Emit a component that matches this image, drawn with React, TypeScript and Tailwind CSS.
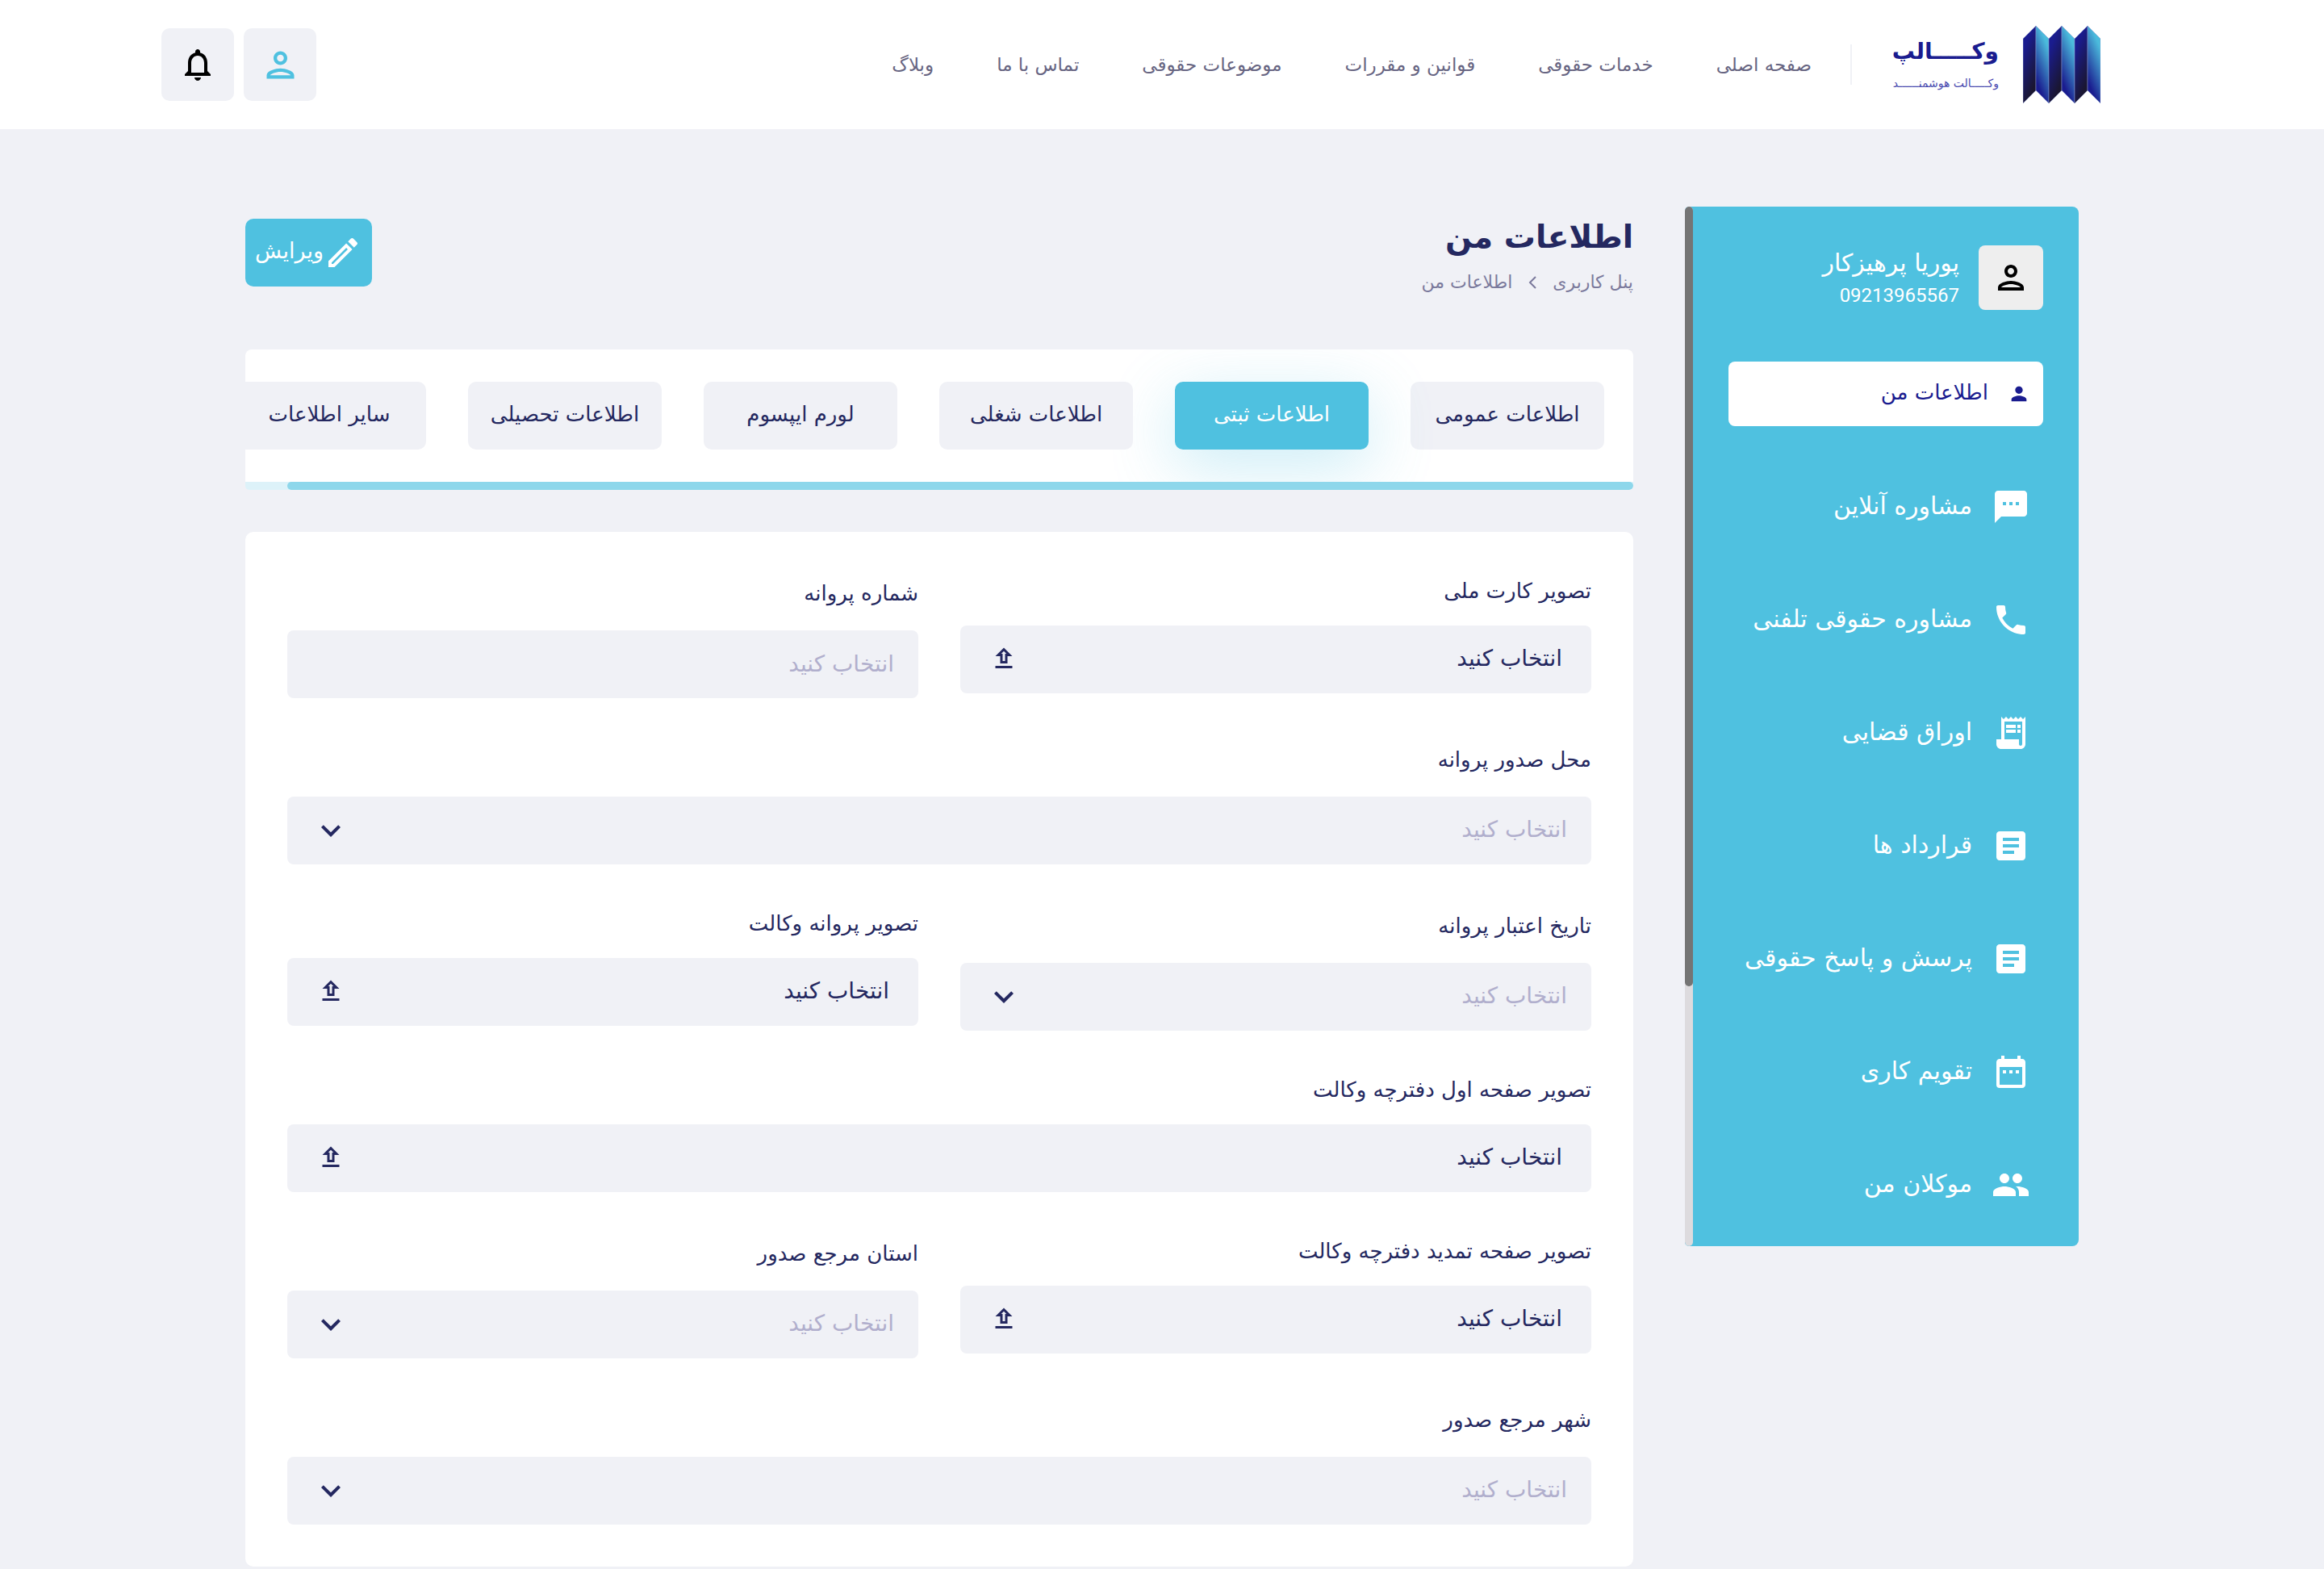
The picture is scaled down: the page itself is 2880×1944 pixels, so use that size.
import type { ReactNode } from "react";
import type { IconType } from "react-icons";
import {
  MdArticle,
  MdDateRange,
  MdExpandMore,
  MdNotificationsNone,
  MdOutlineEdit,
  MdOutlinePerson,
  MdOutlineUpload,
  MdPeople,
  MdPerson,
  MdPhone,
  MdReceiptLong,
  MdSms,
} from "react-icons/md";

const NAV = ["صفحه اصلی", "خدمات حقوقی", "قوانین و مقررات", "موضوعات حقوقی", "تماس با ما", "وبلاگ"];

const MENU: { label: string; icon: IconType }[] = [
  { label: "مشاوره آنلاین", icon: MdSms },
  { label: "مشاوره حقوقی تلفنی", icon: MdPhone },
  { label: "اوراق قضایی", icon: MdReceiptLong },
  { label: "قرارداد ها", icon: MdArticle },
  { label: "پرسش و پاسخ حقوقی", icon: MdArticle },
  { label: "تقویم کاری", icon: MdDateRange },
  { label: "موکلان من", icon: MdPeople },
];

const TABS = [
  "اطلاعات عمومی",
  "اطلاعات ثبتی",
  "اطلاعات شغلی",
  "لورم ایپسوم",
  "اطلاعات تحصیلی",
  "سایر اطلاعات",
];

function LogoMark() {
  const pleats = [0, 32, 64];
  return (
    <svg viewBox="0 0 96 96" className="size-24" aria-hidden="true">
      <defs>
        <linearGradient id="pleat-dark" x1="0.2" y1="0" x2="0.6" y2="1">
          <stop offset="0.2" stopColor="#1a1c8f" />
          <stop offset="0.9" stopColor="#1a1630" />
        </linearGradient>
        <linearGradient id="pleat-light" x1="0.7" y1="0" x2="0.3" y2="1">
          <stop offset="0.15" stopColor="#4bbbdc" />
          <stop offset="0.85" stopColor="#1a1c8f" />
        </linearGradient>
      </defs>
      {pleats.map((x) => (
        <g key={x} stroke="#8f9bd0" strokeWidth="0.5">
          <path d={`M${x} 16L${x + 16} 0V80L${x} 96Z`} fill="url(#pleat-dark)" />
          <path d={`M${x + 16} 0L${x + 32} 16V96L${x + 16} 80Z`} fill="url(#pleat-light)" />
        </g>
      ))}
    </svg>
  );
}

function Header() {
  return (
    <header className="flex h-40 items-center justify-between bg-white pr-[277px] pl-[200px]">
      <div className="flex items-center">
        <a href="#" className="flex items-center gap-[30px]">
          <LogoMark />
          <span className="flex w-[130px] flex-col items-start whitespace-nowrap text-[#1a1c8f]">
            <span className="text-[28px] leading-[46px] font-bold">وکـــــالپ</span>
            <span className="text-[14px] leading-[32px] text-[#4a4bb0]">وکـــــالت هوشمنــــــد</span>
          </span>
        </a>
        <div className="mr-[52px] ml-12 h-[50px] w-[2px] bg-[#f0f1f6]" />
        <nav className="flex items-center gap-[78px]">
          {NAV.map((item) => (
            <a key={item} href="#" className="text-[23px] leading-8 whitespace-nowrap text-[#676582]">
              {item}
            </a>
          ))}
        </nav>
      </div>
      <div className="flex gap-3">
        <button aria-label="حساب کاربری" className="flex size-[90px] items-center justify-center rounded-[10px] bg-[#f0f1f6] text-[#4fc1e0]">
          <MdOutlinePerson className="size-[51px]" />
        </button>
        <button aria-label="اعلان ها" className="flex size-[90px] items-center justify-center rounded-[10px] bg-[#f0f1f6] text-black">
          <MdNotificationsNone className="size-12" />
        </button>
      </div>
    </header>
  );
}

function Sidebar() {
  return (
    <aside className="flex w-[488px] shrink-0 overflow-hidden rounded-l-[5px] rounded-r-[8px] bg-[#4fc1e0] text-white">
      <div className="flex-1 px-11 pt-12 pb-9">
        <div className="flex items-center gap-6">
          <div className="flex size-20 items-center justify-center rounded-[8px] bg-[#eeeeee] text-black">
            <MdOutlinePerson className="size-12" />
          </div>
          <div className="flex flex-col">
            <span className="text-[30px] leading-11 whitespace-nowrap">پوریا پرهیزکار</span>
            <span className="font-[Roboto] text-[24px] leading-9">09213965567</span>
          </div>
        </div>
        <nav className="mt-16 flex flex-col gap-[60px]">
          <a href="#" aria-current="page" className="flex h-20 items-center gap-6 rounded-[8px] bg-white pr-4 text-[26px] whitespace-nowrap text-[#1a1c8f]">
            <MdPerson className="size-7" />
            <span className="pb-1">اطلاعات من</span>
          </a>
          {MENU.map(({ label, icon: Icon }) => (
            <a key={label} href="#" className="flex h-20 items-center gap-6 pr-4 text-[30px] whitespace-nowrap">
              <Icon className="size-12" />
              <span className="pb-1">{label}</span>
            </a>
          ))}
        </nav>
      </div>
      <div className="w-[10px] shrink-0 rounded-[5px] bg-[#dddbde]">
        <div className="h-3/4 rounded-[5px] bg-[#757575]" />
      </div>
    </aside>
  );
}

function PageHeading() {
  return (
    <div className="flex h-[177px] items-start justify-between">
      <div className="flex flex-col">
        <h1 className="text-[39px] leading-[76px] font-bold text-[#242860]">اطلاعات من</h1>
        <nav className="flex items-center gap-5 text-[22px] leading-9 text-[#7b7a9c]">
          <a href="#">پنل کاربری</a>
          <svg viewBox="0 0 10 16" className="h-4 w-[10px]" fill="none" stroke="currentColor" strokeWidth="2" aria-hidden="true">
            <path d="M9 1L2 8l7 7" />
          </svg>
          <span>اطلاعات من</span>
        </nav>
      </div>
      <button className="mt-[15px] flex h-[84px] w-[157px] items-center rounded-[10px] bg-[#4fc1e0] pr-3 text-[27px] text-white">
        <MdOutlineEdit className="size-12 shrink-0" />
        <span className="pb-1">ویرایش</span>
      </button>
    </div>
  );
}

function Tabs() {
  return (
    <div className="overflow-hidden rounded-t-[8px] rounded-b-[5px]">
      <div role="tablist" className="flex gap-[52px] overflow-hidden bg-white px-9 py-10">
        {TABS.map((tab, i) => (
          <button
            key={tab}
            role="tab"
            aria-selected={i === 1}
            className={
              i === 1
                ? "h-[84px] w-60 shrink-0 rounded-[10px] bg-[#4fc1e0] pb-1 text-[26px] whitespace-nowrap text-white shadow-[0_20px_80px_rgba(79,193,224,0.3)]"
                : "h-[84px] w-60 shrink-0 rounded-[10px] bg-[#f0f1f6] pb-1 text-[26px] whitespace-nowrap text-[#242860]"
            }
          >
            {tab}
          </button>
        ))}
      </div>
      <div className="h-[10px] bg-[#ddf2f9]">
        <div className="h-full w-[97%] rounded-[5px] bg-[#8ed7eb]" />
      </div>
    </div>
  );
}

function Field({ id, label, wide, children }: { id: string; label: string; wide?: boolean; children: ReactNode }) {
  return (
    <div className={wide ? "col-span-2" : ""}>
      <label htmlFor={id} className="mb-[22px] block text-[26px] leading-[48px] text-[#242860]">
        {label}
      </label>
      {children}
    </div>
  );
}

function TextField({ id, label }: { id: string; label: string }) {
  return (
    <Field id={id} label={label}>
      <input
        id={id}
        type="text"
        placeholder="انتخاب کنید"
        className="block h-[84px] w-full rounded-[8px] bg-[#f0f1f6] px-[30px] pb-[2px] text-[28px] text-[#242860] placeholder:text-[#b1afcd]"
      />
    </Field>
  );
}

function SelectField({ id, label, wide }: { id: string; label: string; wide?: boolean }) {
  return (
    <Field id={id} label={label} wide={wide}>
      <div className="relative">
        <select id={id} className="block h-[84px] w-full appearance-none rounded-[8px] bg-[#f0f1f6] px-[30px] pb-[2px] text-[28px] text-[#b1afcd]">
          <option>انتخاب کنید</option>
        </select>
        <MdExpandMore className="pointer-events-none absolute inset-y-0 left-[30px] my-auto size-12 text-[#242860]" />
      </div>
    </Field>
  );
}

function UploadField({ id, label, wide }: { id: string; label: string; wide?: boolean }) {
  return (
    <div className={wide ? "col-span-2" : ""}>
      <span className="mb-[22px] block text-[26px] leading-[42px] text-[#242860]">{label}</span>
      <label htmlFor={id} className="relative flex h-[84px] w-full items-center justify-between rounded-[8px] bg-[#f0f1f6] px-9 pb-[2px] text-[28px] text-[#242860]">
        انتخاب کنید
        <MdOutlineUpload className="size-9" />
        <input id={id} type="file" aria-label={label} className="sr-only" />
      </label>
    </div>
  );
}

export default function App() {
  return (
    <div dir="rtl" className="min-h-screen bg-[#f0f1f6] font-['DejaVu_Sans',sans-serif]">
      <Header />
      <div className="mx-auto flex max-w-[2272px] items-start gap-16 pt-24">
        <Sidebar />
        <main className="min-w-0 flex-1">
          <PageHeading />
          <Tabs />
          <form className="mt-[52px] grid grid-cols-2 gap-[52px] rounded-[10px] bg-white p-[52px]">
            <UploadField id="national-card" label="تصویر کارت ملی" />
            <TextField id="licence-number" label="شماره پروانه" />
            <SelectField id="issue-place" label="محل صدور پروانه" wide />
            <SelectField id="expiry" label="تاریخ اعتبار پروانه" />
            <UploadField id="licence-image" label="تصویر پروانه وکالت" />
            <UploadField id="first-page" label="تصویر صفحه اول دفترچه وکالت" wide />
            <UploadField id="renewal-page" label="تصویر صفحه تمدید دفترچه وکالت" />
            <SelectField id="province" label="استان مرجع صدور" />
            <SelectField id="city" label="شهر مرجع صدور" wide />
          </form>
        </main>
      </div>
    </div>
  );
}
